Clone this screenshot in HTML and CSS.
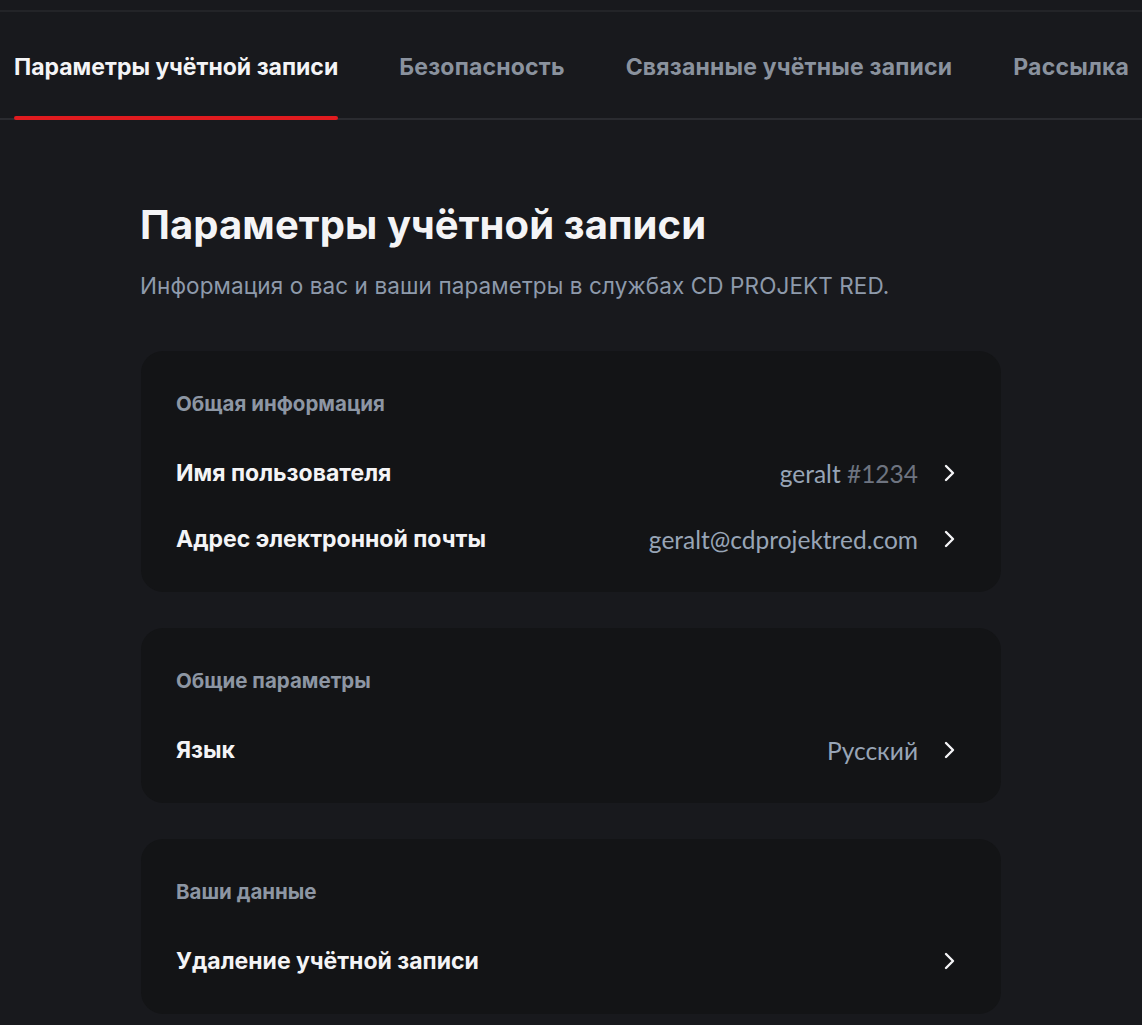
FILE: index.html
```html
<!DOCTYPE html>
<html lang="ru">
<head>
<meta charset="utf-8">
<title>Параметры учётной записи</title>
<link rel="stylesheet" href="styles.css">
</head>
<body>
<div class="topline"></div>
<nav class="tabs">
  <a class="tab active">Параметры учётной записи</a>
  <a class="tab">Безопасность</a>
  <a class="tab">Связанные учётные записи</a>
  <a class="tab">Рассылка</a>
</nav>
<main class="content">
  <h1 class="title">Параметры учётной записи</h1>
  <p class="subtitle">Информация о вас и ваши параметры в службах CD PROJEKT RED.</p>

  <section class="card">
    <h2 class="card-label">Общая информация</h2>
    <div class="row">
      <span class="row-name">Имя пользователя</span>
      <span class="row-value">geralt <span class="tag">#1234</span></span>
      <svg class="chev" viewBox="0 0 24 24"><path d="M9 5l7 7-7 7"/></svg>
    </div>
    <div class="row">
      <span class="row-name">Адрес электронной почты</span>
      <span class="row-value">geralt@cdprojektred.com</span>
      <svg class="chev" viewBox="0 0 24 24"><path d="M9 5l7 7-7 7"/></svg>
    </div>
  </section>

  <section class="card">
    <h2 class="card-label">Общие параметры</h2>
    <div class="row">
      <span class="row-name">Язык</span>
      <span class="row-value">Русский</span>
      <svg class="chev" viewBox="0 0 24 24"><path d="M9 5l7 7-7 7"/></svg>
    </div>
  </section>

  <section class="card">
    <h2 class="card-label">Ваши данные</h2>
    <div class="row">
      <span class="row-name">Удаление учётной записи</span>
      <span class="row-value"></span>
      <svg class="chev" viewBox="0 0 24 24"><path d="M9 5l7 7-7 7"/></svg>
    </div>
  </section>
</main>
</body>
</html>
```

FILE: styles.css
```css
* { box-sizing: border-box; }
html, body {
  margin: 0;
  padding: 0;
  background: #18191d;
  color: #f2f3f5;
  font-family: Inter, "Noto Sans", sans-serif;
  overflow: hidden;
}
.topline {
  margin-top: 10px;
  height: 2px;
  background: #232428;
}
.tabs {
  display: flex;
  gap: 61px;
  padding: 0 14px;
  height: 108px;
  border-bottom: 2px solid #2a2b30;
  align-items: stretch;
}
.tab {
  display: flex;
  align-items: center;
  padding-top: 3px;
  font-size: 23px;
  font-weight: 700;
  color: #8a929e;
  white-space: nowrap;
  position: relative;
  letter-spacing: 0.2px;
}
.tab.active { color: #f4f4f6; letter-spacing: 0; }
.tab.active::after {
  content: "";
  position: absolute;
  left: 0;
  right: 0;
  bottom: -2px;
  height: 4px;
  border-radius: 2px;
  background: #e01b1f;
}
.content {
  width: 860px;
  margin: 0 0 0 141px;
  padding-top: 81px;
}
.title {
  margin: 0 0 0 -1px;
  font-size: 40px;
  font-weight: 700;
  line-height: 48px;
  color: #f4f4f6;
  letter-spacing: 0.1px;
}
.subtitle {
  margin: 23px 0 0 -1px;
  font-size: 22.5px;
  line-height: 28px;
  letter-spacing: 0.1px;
  color: #8e9aab;
}
.card {
  margin-top: 51px;
  background: #131416;
  border-radius: 22px;
  padding: 41px 40px 20px 35px;
}
.card + .card { margin-top: 36px; }
.card-label {
  margin: 0 0 24px;
  font-size: 20.5px;
  line-height: 24px;
  font-weight: 700;
  color: #8d96a3;
}
.row {
  display: flex;
  align-items: center;
  height: 66px;
}
.row-name {
  font-size: 23px;
  font-weight: 700;
  color: #f4f4f6;
  flex: 1;
}
.row-value {
  font-family: Lato, sans-serif;
  font-size: 24.5px;
  color: #98a5b6;
}
.tag { color: #6e7480; }
.chev {
  width: 24px;
  height: 24px;
  margin-left: 19px;
  fill: none;
  stroke: #f4f4f6;
  stroke-width: 2.4;
  stroke-linecap: round;
  stroke-linejoin: round;
}
```
